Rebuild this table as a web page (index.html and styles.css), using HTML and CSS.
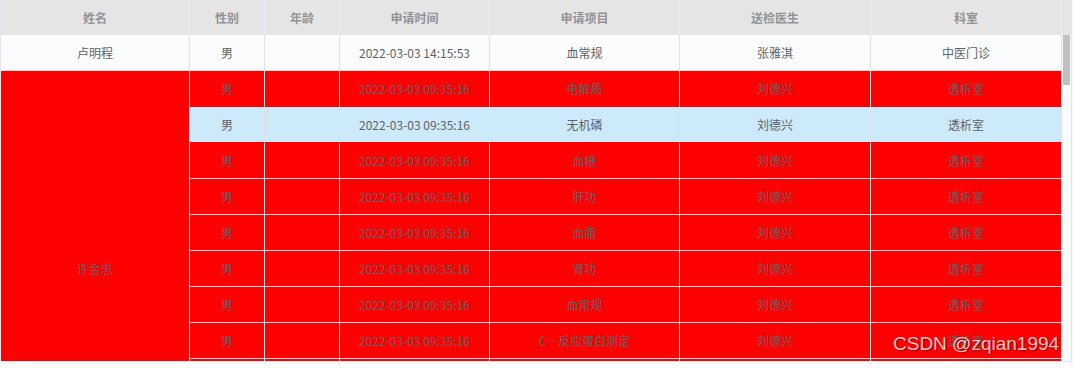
FILE: index.html
```html
<!DOCTYPE html>
<html lang="zh-CN">
<head>
<meta charset="utf-8">
<title>检验申请</title>
<link rel="stylesheet" href="styles.css">
</head>
<body>
<div class="grid">
  <div class="head">
    <table class="tbl">
      <colgroup><col class="c1"><col class="c2"><col class="c3"><col class="c4"><col class="c5"><col class="c6"><col class="c7"></colgroup>
      <tr class="head-row">
        <th>姓名</th><th>性别</th><th>年龄</th><th>申请时间</th><th>申请项目</th><th>送检医生</th><th>科室</th>
      </tr>
    </table>
    <div class="gutter"></div>
  </div>
  <div class="body">
    <div class="viewport">
      <table class="tbl">
        <colgroup><col class="c1"><col class="c2"><col class="c3"><col class="c4"><col class="c5"><col class="c6"><col class="c7"></colgroup>
        <tr class="row plain">
          <td>卢明程</td><td>男</td><td></td><td>2022-03-03 14:15:53</td><td>血常规</td><td>张雅淇</td><td>中医门诊</td>
        </tr>
        <tr class="row warn pre-hover">
          <td rowspan="11" class="name-cell">许金忠</td><td>男</td><td></td><td>2022-03-03 09:35:16</td><td>电解质</td><td>刘德兴</td><td>透析室</td>
        </tr>
        <tr class="row hover">
          <td>男</td><td></td><td>2022-03-03 09:35:16</td><td>无机磷</td><td>刘德兴</td><td>透析室</td>
        </tr>
        <tr class="row warn">
          <td>男</td><td></td><td>2022-03-03 09:35:16</td><td>血糖</td><td>刘德兴</td><td>透析室</td>
        </tr>
        <tr class="row warn">
          <td>男</td><td></td><td>2022-03-03 09:35:16</td><td>肝功</td><td>刘德兴</td><td>透析室</td>
        </tr>
        <tr class="row warn">
          <td>男</td><td></td><td>2022-03-03 09:35:16</td><td>血脂</td><td>刘德兴</td><td>透析室</td>
        </tr>
        <tr class="row warn">
          <td>男</td><td></td><td>2022-03-03 09:35:16</td><td>肾功</td><td>刘德兴</td><td>透析室</td>
        </tr>
        <tr class="row warn">
          <td>男</td><td></td><td>2022-03-03 09:35:16</td><td>血常规</td><td>刘德兴</td><td>透析室</td>
        </tr>
        <tr class="row warn">
          <td>男</td><td></td><td>2022-03-03 09:35:16</td><td>C—反应蛋白测定</td><td>刘德兴</td><td>透析室</td>
        </tr>
        <tr class="row warn">
          <td></td><td></td><td></td><td></td><td></td><td></td>
        </tr>
        <tr class="row warn">
          <td></td><td></td><td></td><td></td><td></td><td></td>
        </tr>
        <tr class="row warn">
          <td></td><td></td><td></td><td></td><td></td><td></td>
        </tr>
      </table>
    </div>
    <div class="scrollbar"><div class="thumb"></div></div>
  </div>
  <div class="watermark">CSDN @zqian1994</div>
</div>
</body>
</html>
```

FILE: styles.css
```css
html, body {
  margin: 0;
  padding: 0;
  background: #fafbfd;
}

body {
  font-family: "Noto Sans CJK SC", "Microsoft YaHei", sans-serif;
  font-size: 12px;
}

.grid {
  position: relative;
  width: 1072px;
  height: 362px;
  box-sizing: border-box;
  border-left: 1px solid #e2e6ec;
  border-right: 1px solid #e2e6ec;
  border-bottom: 1px solid #e2e6ec;
  display: flex;
  flex-direction: column;
  overflow: hidden;
}

.head {
  display: flex;
  height: 35px;
  background: #e5e5e5;
  flex: none;
}

.gutter {
  flex: 1;
  background: #e5e5e5;
}

.tbl {
  width: 1061px;
  table-layout: fixed;
  border-collapse: separate;
  border-spacing: 0;
  flex: none;
}

.c1 { width: 189px; }
.c2 { width: 75px; }
.c3 { width: 75px; }
.c4 { width: 150px; }
.c5 { width: 190px; }
.c6 { width: 191px; }
.c7 { width: 191px; }

.head-row { height: 35px; }

.head-row th {
  padding: 0;
  box-sizing: border-box;
  border-right: 1px solid #eceef2;
  color: #919398;
  font-weight: bold;
  font-size: 12px;
  text-align: center;
  vertical-align: middle;
  white-space: nowrap;
}

.body {
  flex: 1;
  display: flex;
  min-height: 0;
}

.viewport {
  flex: none;
  width: 1061px;
  overflow: hidden;
}

.row { height: 36px; }

.row td {
  padding: 0;
  box-sizing: border-box;
  border-right: 1px solid #dfe3e9;
  border-bottom: 1px solid #dfe3e9;
  color: #606266;
  text-align: center;
  vertical-align: middle;
  white-space: nowrap;
}

.plain td { background: #fbfcfe; }

.warn td { background: #ff0000; }

.name-cell { background: #ff0000; }

.pre-hover td:not(.name-cell) { border-bottom-color: #ff0000; }

.hover td {
  background: #cdeafa;
  border-bottom-color: #ff0000;
}

.scrollbar {
  flex: 1;
  background: #f8fafd;
  padding-left: 1px;
}

.thumb {
  width: 7px;
  height: 50px;
  background: #c1c1c1;
}

.watermark {
  position: absolute;
  left: 892px;
  top: 333px;
  font-family: "Liberation Sans", Arial, sans-serif;
  font-size: 19px;
  color: rgba(255, 235, 235, 0.85);
  text-shadow: 1px 1px 1px rgba(60, 0, 0, 0.6);
  white-space: nowrap;
}
```
